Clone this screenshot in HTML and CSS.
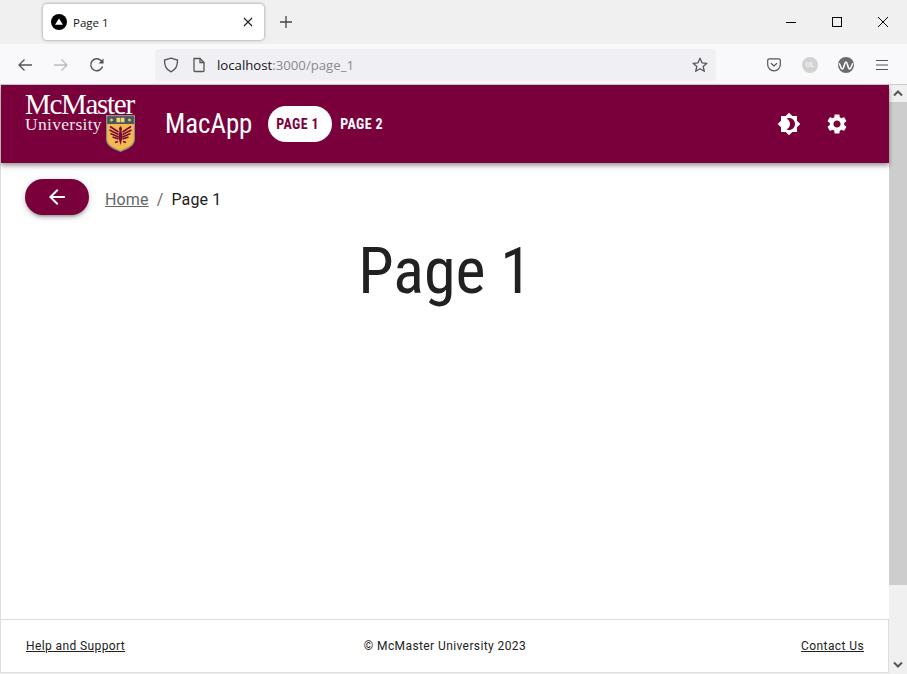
FILE: index.html
```html
<!DOCTYPE html>
<html>
<head>
    <title>Page 1</title>
    <link rel="stylesheet" href="styles.css">
</head>
<body>
    <!-- Browser chrome -->
    <div class="tab-strip">
        <div class="tab">
            <svg class="tab-icon" width="16" height="16" viewBox="0 0 16 16"><circle cx="8" cy="8" r="8" fill="#000"/><path d="M8 4.400L12 10.800H4z" fill="#fff"/></svg>
            <span class="tab-title">Page 1</span>
            <svg class="tab-close" width="10" height="10" viewBox="0 0 10 10"><path d="M1 1l8 8M9 1l-8 8" stroke="#222" stroke-width="1.200" fill="none"/></svg>
        </div>
        <svg class="new-tab" width="14" height="14" viewBox="0 0 14 14"><path d="M7 1v12M1 7h12" stroke="#444" stroke-width="1.300" fill="none"/></svg>
        <div class="window-controls">
            <svg width="12" height="12" viewBox="0 0 12 12"><path d="M1 6.500h10" stroke="#000" fill="none"/></svg>
            <svg width="12" height="12" viewBox="0 0 12 12"><rect x="1.500" y="1.500" width="9" height="9" stroke="#000" fill="none"/></svg>
            <svg width="12" height="12" viewBox="0 0 12 12"><path d="M1 1l10 10M11 1L1 11" stroke="#000" fill="none"/></svg>
        </div>
    </div>
    <div class="toolbar">
        <div class="nav-buttons">
            <svg width="16" height="16" viewBox="0 0 16 16"><path d="M15 8H2M7.500 2.500L2 8l5.500 5.500" stroke="#555" stroke-width="1.300" fill="none"/></svg>
            <svg width="16" height="16" viewBox="0 0 16 16"><path d="M1 8h13M8.500 2.500L14 8l-5.500 5.500" stroke="#bbb" stroke-width="1.300" fill="none"/></svg>
            <svg width="16" height="16" viewBox="0 0 16 16"><path d="M13.500 9.500A6 6 0 1 1 12 3.500L14 6" stroke="#555" stroke-width="1.400" fill="none"/><path d="M14.500 1.500v5h-5z" fill="#555"/></svg>
        </div>
        <div class="url-bar">
            <svg width="16" height="16" viewBox="0 0 16 16"><path d="M8 1.200L14.500 3c.2 5.500-1.800 9.800-6.500 11.800C3.300 12.800 1.300 8.500 1.500 3z" stroke="#555" stroke-width="1.300" fill="none"/></svg>
            <svg class="page-icon" width="14" height="16" viewBox="0 0 14 16"><path d="M2 1.500h6l4 4v8a1 1 0 0 1-1 1H3a1 1 0 0 1-1-1z" stroke="#555" stroke-width="1.300" fill="none"/><path d="M8 1.500v4h4" stroke="#555" stroke-width="1.300" fill="none"/></svg>
            <span class="url-text">localhost<span class="url-dim">:3000/page_1</span></span>
            <svg class="star-icon" width="16" height="16" viewBox="0 0 16 16"><path d="M8 1.300l2 4.500 4.900.5-3.700 3.200 1.100 4.800L8 11.800l-4.300 2.500 1.100-4.800L1.100 6.300 6 5.800z" stroke="#555" stroke-width="1.300" fill="none" stroke-linejoin="round"/></svg>
        </div>
        <div class="toolbar-icons">
            <svg class="pocket-icon" width="14" height="14" viewBox="0 0 14 14"><path d="M.7 2.500A1.700 1.700 0 0 1 2.400.8h9.200a1.700 1.700 0 0 1 1.700 1.700V6.500a6.300 6.300 0 0 1-12.600 0z" stroke="#555" stroke-width="1.200" fill="none"/><path d="M4 5.200l3 2.800 3-2.800" stroke="#555" stroke-width="1.200" fill="none"/></svg>
            <span class="ext-badge">UL</span>
            <svg class="wave-icon" width="16" height="16" viewBox="0 0 16 16"><circle cx="8" cy="8" r="8" fill="#6b6b6b"/><path d="M.8 6.500c1.700 0 1.700 5.500 3.500 5.500S6.400 5 8 5s1.800 7 3.700 7 1.800-5.500 3.500-5.500" stroke="#fff" stroke-width="1.600" fill="none"/></svg>
            <svg class="menu-icon" width="12" height="12" viewBox="0 0 12 12"><path d="M0 1.500h12M0 6h12M0 10.500h12" stroke="#555" stroke-width="1.200" fill="none"/></svg>
        </div>
    </div>

    <!-- Page viewport -->
    <div class="viewport">
        <div class="page">
            <header class="app-header">
                <div class="logo">
                    <div class="logo-name">McMaster</div>
                    <div class="logo-row">
                        <span class="logo-uni">University</span>
                        <svg class="crest" width="29" height="37" viewBox="0 0 29 37">
                            <path d="M0 0h29v24c0 7-7 10-14.500 13C7 34 0 31 0 24z" fill="#8f8f88"/>
                            <path d="M1.200 1.200h26.600v7.800H1.200z" fill="#4a565a"/>
                            <path d="M1.200 9h26.600v15c0 6-6.500 8.500-13.300 11.500C7.700 32.500 1.200 30 1.200 24z" fill="#f1b94f"/>
                            <path d="M3.500 5l2-1.800 2 1.800-2 1.800zM21.500 5l2-1.800 2 1.800-2 1.800z" fill="#d8c469"/>
                            <path d="M10.500 2.800h3.700v4.400h-3.700zM14.800 2.800h3.700v4.400h-3.700z" fill="#f4d27a"/>
                            <path d="M14.500 11l1.600 2.200-.6 2.800 1.200 6-2.200 8-2.200-8 1.200-6-.6-2.800z" fill="#7a0a3a"/>
                            <path d="M12.500 17L4 11.500M12.500 19.500L3.500 15M12.500 22L4.500 18.500M12.500 24L6.500 22M16.500 17L25 11.500M16.500 19.500L25.500 15M16.500 22L24.500 18.500M16.500 24L22.500 22" stroke="#7a0a3a" stroke-width="1.700" fill="none"/>
                            <path d="M9 27.500l3-1M20 27.500l-3-1" stroke="#7a0a3a" stroke-width="1.500" fill="none"/>
                        </svg>
                    </div>
                </div>
                <div class="app-name">MacApp</div>
                <nav class="app-nav">
                    <a class="nav-link nav-link-active">PAGE 1</a>
                    <a class="nav-link">PAGE 2</a>
                </nav>
                <div class="header-actions">
                    <svg width="24" height="24" viewBox="0 0 24 24"><path fill="#fff" d="M20 8.690V4h-4.690L12 .690 8.690 4H4v4.690L.690 12 4 15.310V20h4.690L12 23.310 15.310 20H20v-4.690L23.310 12 20 8.690zM12 18c-.890 0-1.740-.200-2.500-.550C11.560 16.500 13 14.420 13 12s-1.440-4.500-3.500-5.450C10.260 6.200 11.110 6 12 6c3.310 0 6 2.690 6 6s-2.690 6-6 6z"/></svg>
                    <svg width="24" height="24" viewBox="0 0 24 24"><path fill="#fff" d="M19.140 12.940c.040-.300.060-.610.060-.940 0-.320-.020-.640-.070-.940l2.030-1.580c.180-.140.230-.410.120-.610l-1.920-3.320c-.120-.220-.370-.290-.590-.220l-2.390.960c-.500-.380-1.030-.700-1.620-.940l-.360-2.540c-.040-.240-.240-.410-.480-.410h-3.840c-.240 0-.430.170-.470.410l-.360 2.540c-.590.240-1.130.570-1.620.940l-2.390-.960c-.220-.080-.470 0-.590.220L2.740 8.870c-.120.210-.080.470.120.610l2.030 1.580c-.050.300-.090.630-.090.940s.020.640.070.940l-2.030 1.580c-.180.140-.230.410-.120.610l1.920 3.320c.120.220.370.290.590.220l2.390-.960c.500.380 1.030.700 1.620.940l.360 2.540c.050.240.240.410.480.410h3.840c.240 0 .440-.170.470-.410l.360-2.540c.590-.240 1.130-.560 1.620-.940l2.390.960c.220.080.470 0 .590-.220l1.920-3.320c.120-.220.070-.470-.120-.610l-2.010-1.580zM12 15.600c-1.980 0-3.600-1.620-3.600-3.600s1.620-3.600 3.600-3.600 3.600 1.620 3.600 3.600-1.620 3.600-3.600 3.600z"/></svg>
                </div>
            </header>

            <main class="content">
                <div class="crumb-row">
                    <button class="back-button">
                        <svg width="24" height="24" viewBox="0 0 24 24"><path fill="#fff" d="M20 11H7.830l5.590-5.590L12 4l-8 8 8 8 1.410-1.410L7.830 13H20v-2z"/></svg>
                    </button>
                    <div class="breadcrumbs">
                        <a class="crumb-link">Home</a>
                        <span class="crumb-sep">/</span>
                        <span class="crumb-current">Page 1</span>
                    </div>
                </div>
                <h1 class="page-title">Page 1</h1>
            </main>

            <footer class="app-footer">
                <a class="footer-link">Help and Support</a>
                <span>© McMaster University 2023</span>
                <a class="footer-link footer-link-right">Contact Us</a>
            </footer>
        </div>
        <div class="scrollbar">
            <div class="scroll-btn">
                <svg width="10" height="7" viewBox="0 0 10 7"><path d="M1 5.500l4-4 4 4" stroke="#555" stroke-width="2" fill="none"/></svg>
            </div>
            <div class="scroll-thumb"></div>
            <div class="scroll-track"></div>
            <div class="scroll-btn">
                <svg width="10" height="7" viewBox="0 0 10 7"><path d="M1 1.500l4 4 4-4" stroke="#555" stroke-width="2" fill="none"/></svg>
            </div>
        </div>
    </div>
</body>
</html>
```

FILE: styles.css
```css
html, body {
    height: 100%;
}

body {
    margin: 0;
    display: flex;
    flex-direction: column;
    overflow: hidden;
    font-family: Roboto, sans-serif;
    color: #212121;
    background-color: #f0f0f0;
}

/* Browser chrome */
.tab-strip {
    height: 44px;
    flex: none;
    display: flex;
    align-items: center;
    padding-left: 43px;
    background-color: #f0f0f0;
}

.tab {
    width: 221px;
    height: 36px;
    box-sizing: border-box;
    display: flex;
    align-items: center;
    padding: 0 11px 0 8px;
    background-color: #fff;
    border-radius: 4px;
    box-shadow: 0 0 3px rgba(0, 0, 0, 0.45);
}

.tab-title {
    margin-left: 6px;
    flex-grow: 1;
    font-family: "Open Sans", sans-serif;
    font-size: 11.5px;
    color: #15141a;
}

.new-tab {
    margin-left: 15px;
}

.window-controls {
    margin-left: auto;
    display: flex;
    gap: 34px;
    padding-right: 18px;
}

.toolbar {
    height: 41px;
    flex: none;
    box-sizing: border-box;
    display: flex;
    align-items: center;
    padding-left: 17px;
    padding-top: 1px;
    background-color: #f9f9fb;
    border-bottom: 1px solid #ccc;
}

.nav-buttons {
    width: 138px;
    display: flex;
    gap: 20px;
}

.url-bar {
    width: 561px;
    height: 32px;
    box-sizing: border-box;
    display: flex;
    align-items: center;
    padding: 0 8px;
    background-color: #f0f0f4;
    border-radius: 4px;
}

.page-icon {
    margin-left: 13px;
}

.url-text {
    margin-left: 11px;
    flex-grow: 1;
    font-family: "Open Sans", sans-serif;
    font-size: 13.2px;
    color: #15141a;
}

.url-dim {
    color: #8a8a8e;
}

.toolbar-icons {
    margin-left: 51px;
    display: flex;
    align-items: center;
    gap: 21px;
}

.wave-icon {
    margin-left: -1px;
}

.menu-icon {
    margin-left: 1px;
}

.ext-badge {
    width: 16px;
    height: 16px;
    border-radius: 50%;
    background-color: #d2d2d2;
    color: #f4f4f4;
    font-size: 7px;
    font-weight: bold;
    line-height: 16px;
    text-align: center;
}

/* Page */
.viewport {
    flex: 1;
    min-height: 0;
    display: flex;
    padding-bottom: 1px;
}

.page {
    flex: 1;
    min-width: 0;
    display: flex;
    flex-direction: column;
    background-color: #fff;
    border-left: 1px solid #ddd;
}

.app-header {
    height: 78px;
    flex: none;
    display: flex;
    align-items: center;
    padding-left: 24px;
    background-color: #7a003c;
    box-shadow: 0 2px 4px rgba(0, 0, 0, 0.3), 0 4px 5px rgba(0, 0, 0, 0.14);
    position: relative;
}

.logo {
    width: 110px;
    height: 60px;
    margin-top: -4px;
    color: #fff;
    font-family: "Liberation Serif", serif;
}

.logo-name {
    height: 22px;
    font-size: 29px;
    line-height: 24px;
    letter-spacing: -1.3px;
    white-space: nowrap;
}

.logo-row {
    display: flex;
    justify-content: space-between;
}

.logo-uni {
    font-size: 17.5px;
    line-height: 20px;
    letter-spacing: 0.3px;
    opacity: 0.9;
}

.crest {
    margin-top: 1px;
}

.app-name {
    margin-left: 30px;
    color: #fff;
    font-size: 26.8px;
    font-stretch: condensed;
}

.app-nav {
    margin-left: 16px;
    display: flex;
    align-items: center;
}

.nav-link {
    height: 36px;
    padding: 0 8px;
    border-radius: 18px;
    color: #fff;
    font-size: 14px;
    font-weight: bold;
    font-stretch: condensed;
    line-height: 36px;
    letter-spacing: 0.4px;
}

.nav-link-active {
    width: 48px;
    background-color: #fff;
    color: #7a003c;
}

.header-actions {
    margin-left: auto;
    display: flex;
    gap: 24px;
    padding-right: 40px;
}

.content {
    flex: 1;
    min-height: 0;
    padding: 16px 24px 0;
}

.crumb-row {
    display: flex;
    align-items: center;
    gap: 16px;
}

.back-button {
    width: 64px;
    height: 36px;
    padding: 0;
    display: flex;
    align-items: center;
    justify-content: center;
    background-color: #7a003c;
    border: none;
    border-radius: 18px;
    box-shadow: 0 3px 3px -2px rgba(0, 0, 0, 0.3), 0 3px 4px rgba(0, 0, 0, 0.14), 0 1px 8px rgba(0, 0, 0, 0.12);
}

.breadcrumbs {
    display: flex;
    gap: 8px;
    padding-top: 4px;
    font-size: 16px;
    letter-spacing: 0.15px;
    color: #666;
}

.crumb-link {
    text-decoration: underline;
}

.crumb-current {
    color: #212121;
}

.page-title {
    margin: 0;
    margin-top: 19px;
    font-size: 64px;
    font-weight: 400;
    font-stretch: condensed;
    line-height: 75px;
    text-align: center;
}

.app-footer {
    height: 54px;
    flex: none;
    box-sizing: border-box;
    display: grid;
    grid-template-columns: 1fr auto 1fr;
    align-items: center;
    padding: 0 24px 0 25px;
    border-top: 1px solid #ddd;
    border-bottom: 1px solid #ddd;
    border-right: 1px solid #ddd;
    font-size: 12px;
    letter-spacing: 0.4px;
    color: #212121;
}

.footer-link {
    text-decoration: underline;
}

.footer-link-right {
    text-align: right;
}

/* Scrollbar */
.scrollbar {
    width: 18px;
    flex: none;
    display: flex;
    flex-direction: column;
    background-color: #f0f0f0;
}

.scroll-btn {
    height: 17px;
    flex: none;
    display: flex;
    align-items: center;
    justify-content: center;
}

.scroll-thumb {
    height: 483px;
    flex: none;
    background-color: #cdcdcd;
}

.scroll-track {
    flex: 1;
}
```
